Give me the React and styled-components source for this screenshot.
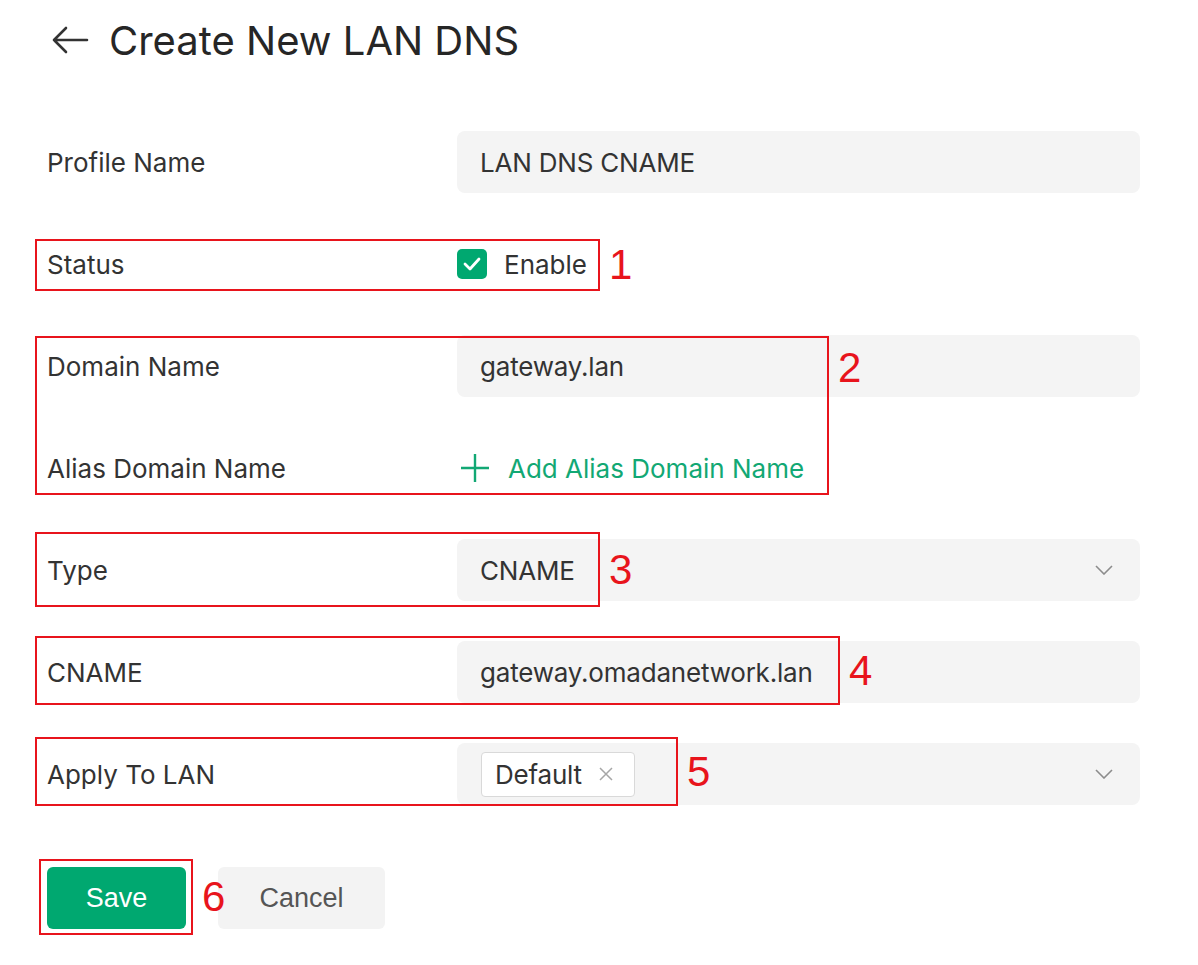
import React from 'react';
import styled, {createGlobalStyle} from "styled-components";

const GlobalStyle = createGlobalStyle`
  body {
    margin: 0;
    background: #ffffff;
    font-family: Inter, "Noto Sans", sans-serif;
    color: #333333;
  }
`

const Mark = ({n, $left, $top, $w, $h, $numTop}) => (
    <Outline $left={$left} $top={$top} $w={$w} $h={$h}>
        <Num $numTop={$numTop}>{n}</Num>
    </Outline>
)

const ChevronDown = () => (
    <svg width="18" height="10" viewBox="0 0 18 10" fill="none">
        <path d="M1 1l8 8 8-8" stroke="#8c8c8c" strokeWidth="1.6"/>
    </svg>
)

const App = () => {
    return (
        <>
            <GlobalStyle/>
            <Page>
                <Header>
                    <svg width="38" height="28" viewBox="0 0 38 28" fill="none">
                        <path d="M36 14H3M15 2L3 14l12 12" stroke="#333" strokeWidth="2.6" strokeLinecap="round"
                              strokeLinejoin="round"/>
                    </svg>
                    <h1>Create New LAN DNS</h1>
                </Header>

                <Form>
                    <Row>
                        <Label>Profile Name</Label>
                        <Field>LAN DNS CNAME</Field>
                    </Row>

                    <Row>
                        <Label>Status</Label>
                        <Check>
                            <Box>
                                <svg width="18" height="14" viewBox="0 0 18 14" fill="none">
                                    <path d="M2 7l5 5 9-10" stroke="#fff" strokeWidth="2.8" strokeLinecap="round"
                                          strokeLinejoin="round"/>
                                </svg>
                            </Box>
                            Enable
                        </Check>
                        <Mark n="1" $left={-12} $top={6} $w={565} $h={52}/>
                    </Row>

                    <Row>
                        <Label>Domain Name</Label>
                        <Field>gateway.lan</Field>
                        <Mark n="2" $left={-12} $top={1} $w={794} $h={159} $numTop={9}/>
                    </Row>

                    <Row>
                        <Label>Alias Domain Name</Label>
                        <AddLink>
                            <svg width="30" height="30" viewBox="0 0 30 30" fill="none">
                                <path d="M15 1v28M1 15h28" stroke="#12a874" strokeWidth="2.4"/>
                            </svg>
                            Add Alias Domain Name
                        </AddLink>
                    </Row>

                    <Row>
                        <Label>Type</Label>
                        <Field $select>
                            CNAME
                            <ChevronDown/>
                        </Field>
                        <Mark n="3" $left={-12} $top={-7} $w={565} $h={75}/>
                    </Row>

                    <Row>
                        <Label>CNAME</Label>
                        <Field>gateway.omadanetwork.lan</Field>
                        <Mark n="4" $left={-12} $top={-5} $w={805} $h={69}/>
                    </Row>

                    <Row>
                        <Label>Apply To LAN</Label>
                        <Field $select>
                            <Tag>
                                Default
                                <svg width="16" height="16" viewBox="0 0 16 16" fill="none">
                                    <path d="M2 2l12 12M14 2L2 14" stroke="#a6a6a6" strokeWidth="1.5"/>
                                </svg>
                            </Tag>
                            <ChevronDown/>
                        </Field>
                        <Mark n="5" $left={-12} $top={-6} $w={643} $h={69}/>
                    </Row>
                </Form>

                <Actions>
                    <Button $primary>Save</Button>
                    <Button>Cancel</Button>
                    <Mark n="6" $left={-8} $top={-8} $w={154} $h={76}/>
                </Actions>
            </Page>
        </>
    );
};

const Page = styled.div`
  width: 1198px;
  height: 965px;
  padding: 0 58px 0 47px;
  box-sizing: border-box;
`

const Header = styled.div`
  display: flex;
  align-items: center;
  gap: 20px;
  height: 80px;
  padding-left: 4px;

  > h1 {
    margin: 0;
    font-size: 40px;
    font-weight: 400;
    color: #262626;
  }
`

const Form = styled.div`
  display: flex;
  flex-direction: column;
  gap: 40px;
  margin-top: 51px;
`

const Row = styled.div`
  position: relative;
  display: grid;
  grid-template-columns: 410px 683px;
  align-items: center;
  height: 62px;
`

const Label = styled.div`
  font-size: 26px;
  color: #333;
`

const Field = styled.div`
  height: 62px;
  background: #f4f4f4;
  border-radius: 8px;
  display: flex;
  align-items: center;
  justify-content: ${p => p.$select ? 'space-between' : 'flex-start'};
  padding: 0 27px 0 23px;
  box-sizing: border-box;
  font-size: 26px;
  color: #333;
  letter-spacing: -0.2px;
`

const Check = styled.label`
  display: flex;
  align-items: center;
  gap: 17px;
  font-size: 26px;
  color: #333;
`

const Box = styled.span`
  width: 30px;
  height: 30px;
  border-radius: 5px;
  background: #00a870;
  display: flex;
  align-items: center;
  justify-content: center;
`

const AddLink = styled.div`
  display: flex;
  align-items: center;
  gap: 18px;
  padding-left: 3px;
  font-size: 26px;
  color: #12a874;
`

const Tag = styled.span`
  display: inline-flex;
  align-items: center;
  gap: 16px;
  height: 45px;
  padding: 0 20px 0 13px;
  margin-left: 1px;
  background: #fff;
  border: 1px solid #d9d9d9;
  border-radius: 4px;
  box-sizing: border-box;
  font-size: 26px;
  color: #333;
`

const Actions = styled.div`
  position: relative;
  display: flex;
  gap: 32px;
  margin-top: 62px;
`

const Button = styled.button`
  height: 62px;
  width: ${p => p.$primary ? '139px' : '167px'};
  border: none;
  border-radius: 6px;
  background: ${p => p.$primary ? '#00a870' : '#f3f3f3'};
  color: ${p => p.$primary ? '#fff' : '#555'};
  font-family: "Liberation Sans", Arial, sans-serif;
  font-size: 27px;
  cursor: pointer;
`

const Outline = styled.div`
  position: absolute;
  left: ${p => p.$left}px;
  top: ${p => p.$top}px;
  width: ${p => p.$w}px;
  height: ${p => p.$h}px;
  border: 2px solid #e8141c;
  box-sizing: border-box;
  pointer-events: none;
`

const Num = styled.span`
  position: absolute;
  left: calc(100% + 11px);
  top: ${p => p.$numTop != null ? `${p.$numTop}px` : '50%'};
  transform: ${p => p.$numTop != null ? 'none' : 'translateY(-50%)'};
  font-family: "Liberation Sans", Arial, sans-serif;
  font-size: 42px;
  line-height: 1;
  color: #e8141c;
`

export default App;
